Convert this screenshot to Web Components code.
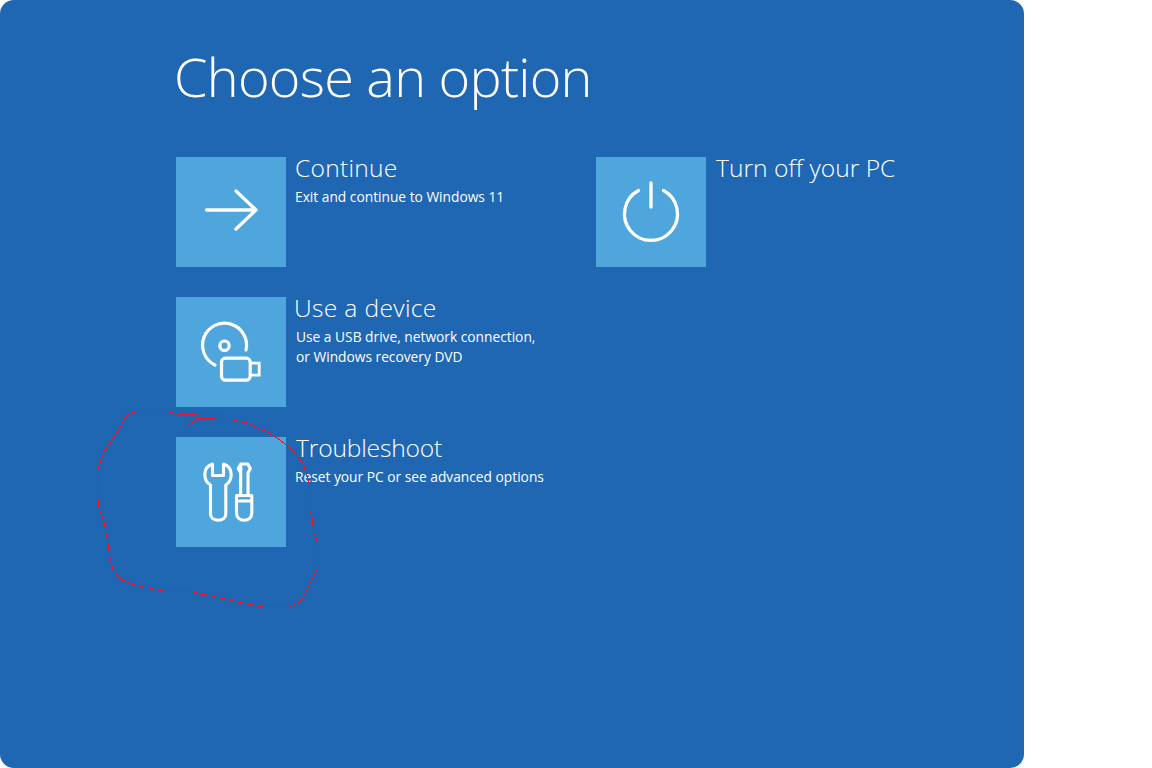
<!DOCTYPE html>
<html lang="en"><head><meta charset="utf-8"><title>Choose an option</title>
<style>html,body{margin:0;padding:0;background:#fff}body{font-family:"Open Sans","Noto Sans",sans-serif}</style>
</head><body>
<recovery-screen heading="Choose an option">
  <recovery-option slot="col1" label="Continue" dx="0" sdx="0" ls=".25" icon="arrow">Exit and continue to Windows 11</recovery-option>
  <recovery-option slot="col1" label="Use a device" dx="-1" sdx="1" ls=".33" icon="device">Use a USB drive, network connection,<br>or Windows recovery DVD</recovery-option>
  <recovery-option slot="col1" label="Troubleshoot" dx="1" sdx="0" ls="-.17" icon="tools">Reset your PC or see advanced options</recovery-option>
  <recovery-option slot="col2" label="Turn off your PC" dx="1" sdx="0" ls="0" icon="power"></recovery-option>
</recovery-screen>
<script>
const ICONS={
arrow:'<path d="M30.500 53H80M60 34L80 53L60 72" stroke-width="3.300"/>',
power:'<path d="M55 26V50M42.500 33.500A26.500 26.500 0 1 0 67.500 33.500" stroke-width="3.300"/>',
device:'<path d="M39 68A22 22 0 1 1 70 53" stroke-width="3.200"/><circle cx="48.500" cy="48.700" r="4.700" stroke-width="3.200"/><rect x="45.500" y="61.200" width="28.700" height="22" rx="4" stroke-width="3.200"/><path stroke-linecap="butt" stroke-linejoin="miter" d="M74.200 66.200H83.200V78.200H74.200" stroke-width="2.800"/>',
tools:'<path d="M36.500 27V38.500H47.500V27C52 28.500 55.200 32.500 55.200 37.500C55.200 42 53 46 49.800 48V77C49.800 81 46.500 83.200 42.200 83.200C38 83.200 34.500 81 34.500 77V48C31 46 28.800 42 28.800 37.500C28.800 32.500 32 28.500 36.500 27Z" stroke-width="3.100"/><path d="M64.800 27H71.800L74.300 31.500L72 36V58.500M64.600 58.500V36L62.300 31.500L64.800 27ZM60.500 58.500H75.800V76C75.800 80.500 72.500 83.200 68.200 83.200C64 83.200 60.500 80.500 60.500 76ZM60.500 64H75.800" stroke-width="3.100"/>'
};
class RecoveryOption extends HTMLElement{
  constructor(){super();this.attachShadow({mode:'open'});}
  connectedCallback(){
    const a=n=>this.getAttribute(n)||'';
    this.shadowRoot.innerHTML=`<style>
      :host{display:flex;height:110px;color:#fff}
      .tile{flex:none;width:110px;height:110px;background:#4ea6dc}
      svg{display:block;width:110px;height:110px;fill:none;stroke:#fff;stroke-linecap:round;stroke-linejoin:round}
      .text{margin-left:9px}
      .label{font-size:24.6px;font-weight:300;line-height:24px;letter-spacing:${+a('ls')}px;margin:-1px 0 0 ${+a('dx')}px;white-space:nowrap}
      .sub{font-size:13.75px;line-height:20px;margin:7px 0 0 ${+a('sdx')}px;white-space:nowrap}
    </style>
    <div class="tile"><svg viewBox="0 0 110 110">${ICONS[a('icon')]}</svg></div>
    <div class="text"><div class="label">${a('label')}</div><div class="sub"><slot></slot></div></div>`;
  }
}
customElements.define('recovery-option',RecoveryOption);
class RecoveryScreen extends HTMLElement{
  constructor(){super();this.attachShadow({mode:'open'});}
  connectedCallback(){
    this.shadowRoot.innerHTML=`<style>
      :host{display:block;position:relative;width:1024px;height:768px;box-sizing:border-box;padding:42px 0 0 176px;background:#1f67b3;border-radius:14px;overflow:hidden}
      h1{margin:0 0 46px -2px;font-size:54px;line-height:69px;letter-spacing:-.75px;font-weight:300;color:#fff;white-space:nowrap}
      .cols{display:grid;grid-template-columns:420px 420px}
      .col{display:flex;flex-direction:column;gap:30px}
      .mark{position:absolute;left:0;top:0;pointer-events:none}
    </style>
    <h1>${this.getAttribute('heading')}</h1>
    <div class="cols"><div class="col"><slot name="col1"></slot></div><div class="col"><slot name="col2"></slot></div></div>
    <svg class="mark" width="1024" height="768" viewBox="0 0 1024 768"><path shape-rendering="crispEdges" fill="none" stroke="#f5102a" stroke-width="1" d="M223 416L197 415L177 414L167 411L138 411L131 413L125 417L122 424L117 432L112 440L104 452L100 463L97 472L97 490L99 508L104 522L107 538L110 557L113 570L122 580L135 585L163 591L190 591L200 594L203 594L233 601L263 607L290 607L300 602L307 590L317 570L318 543L314 533L312 517L309 508L309 483L303 463L290 448L280 440L267 432L247 423L233 420L198 418L187 426"/></svg>`;
  }
}
customElements.define('recovery-screen',RecoveryScreen);
</script>
</body></html>
